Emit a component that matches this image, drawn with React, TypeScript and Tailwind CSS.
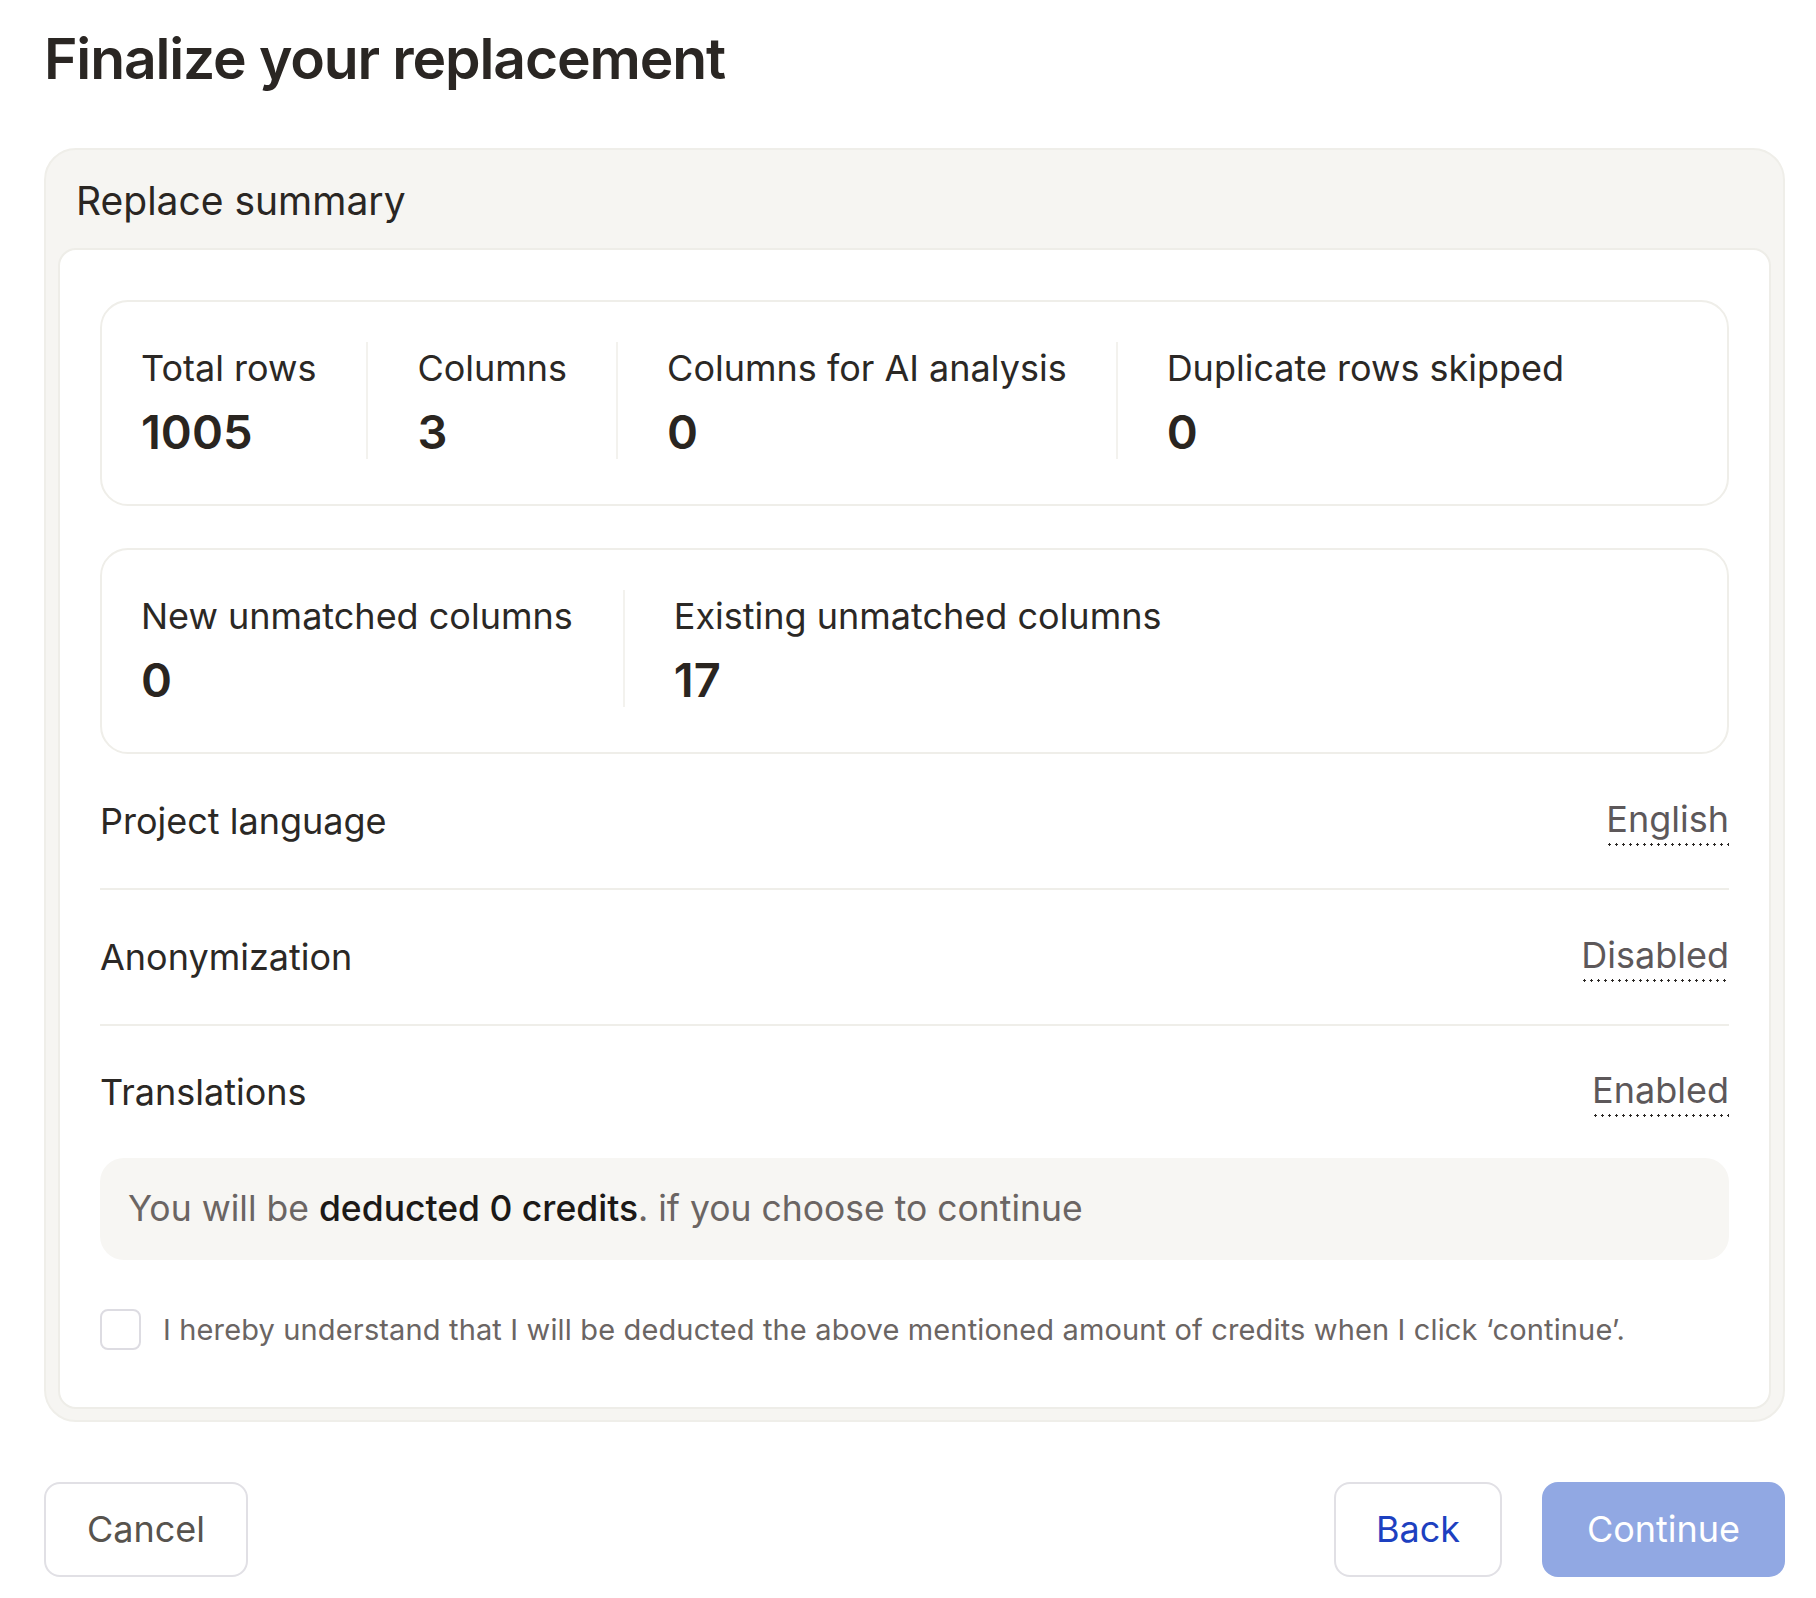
const stats1 = [
  { label: 'Total rows', value: '1005' },
  { label: 'Columns', value: '3' },
  { label: 'Columns for AI analysis', value: '0' },
  { label: 'Duplicate rows skipped', value: '0' },
]

const stats2 = [
  { label: 'New unmatched columns', value: '0' },
  { label: 'Existing unmatched columns', value: '17' },
]

const settings = [
  { label: 'Project language', value: 'English' },
  { label: 'Anonymization', value: 'Disabled' },
  { label: 'Translations', value: 'Enabled' },
]

function StatCard({ items }: { items: { label: string; value: string }[] }) {
  return (
    <div className="flex rounded-[28px] border-2 border-[#efeee9] px-[39px] pb-[45px] pt-[40px]">
      {items.map((item, i) => (
        <div
          key={item.label}
          className={`flex h-[117px] flex-col ${i === 0 ? 'pr-[50px]' : 'border-l-2 border-[#f3f2ee] px-[49px]'}`}
        >
          <div className="text-[36px] leading-[52px] text-[#2b2825]">{item.label}</div>
          <div className="mt-[11px] text-[47px] font-semibold leading-[54px] text-[#2a2520]">{item.value}</div>
        </div>
      ))}
    </div>
  )
}

export default function App() {
  return (
    <div className="min-h-[1598px] bg-white pb-[22px] pl-[44px] pr-[31px] pt-[31px] font-['Inter',sans-serif]">
      <h1 className="text-[57px] font-semibold leading-[56px] tracking-[-0.02em] text-[#2a2623]">
        Finalize your replacement
      </h1>

      <div className="mt-[61px] rounded-[32px] border-2 border-[#efeee9] bg-[#f6f5f2] px-[12px] pb-[11px]">
        <div className="flex h-[98px] items-center pl-[18px] pt-[4px] text-[39px] text-[#2a2623]">Replace summary</div>

        <div className="rounded-[18px] border-2 border-[#eeede8] bg-white px-[40px] pb-[55px] pt-[50px]">
          <StatCard items={stats1} />
          <div className="mt-[42px]">
            <StatCard items={stats2} />
          </div>

          <div>
            {settings.map((row, i) => (
              <div
                key={row.label}
                className={`flex items-center justify-between ${i < 2 ? 'h-[136px] border-b-2 border-[#efeee9]' : 'h-[132px]'}`}
              >
                <span className="text-[36px] text-[#2b2825]">{row.label}</span>
                <span className="bg-[radial-gradient(circle,#2b2825_1.1px,transparent_1.4px)] bg-[length:7px_3px] bg-[position:0_100%] bg-repeat-x pb-[5px] text-[36px] leading-[44px] text-[#5d585a]">
                  {row.value}
                </span>
              </div>
            ))}
          </div>

          <div className="flex h-[102px] items-center rounded-[24px] bg-[#f7f6f3] px-[28px] text-[35.5px] text-[#6b6563]">
            <span>
              You will be <span className="font-medium text-[#1c1917]">deducted 0 credits</span>. if you choose to continue
            </span>
          </div>

          <label className="mt-[48px] flex items-center gap-[22px]">
            <input type="checkbox" className="h-[41px] w-[41px] appearance-none rounded-[8px] border-2 border-[#dddce2] bg-white" />
            <span className="text-[29px] tracking-[0.005em] text-[#6b6563]">
              I hereby understand that I will be deducted the above mentioned amount of credits when I click ‘continue’.
            </span>
          </label>
        </div>
      </div>

      <div className="mt-[60px] flex items-center justify-between">
        <button className="h-[95px] w-[204px] rounded-[16px] border-2 border-[#e1e0e5] bg-white text-[36px] text-[#57534e]">
          Cancel
        </button>
        <div className="flex gap-[40px]">
          <button className="h-[95px] w-[168px] rounded-[16px] border-2 border-[#e1e0e5] bg-white text-[36px] text-[#1d40c0]">
            Back
          </button>
          <button className="h-[95px] w-[243px] rounded-[16px] bg-[#91a8e3] text-[36px] text-white">Continue</button>
        </div>
      </div>
    </div>
  )
}
